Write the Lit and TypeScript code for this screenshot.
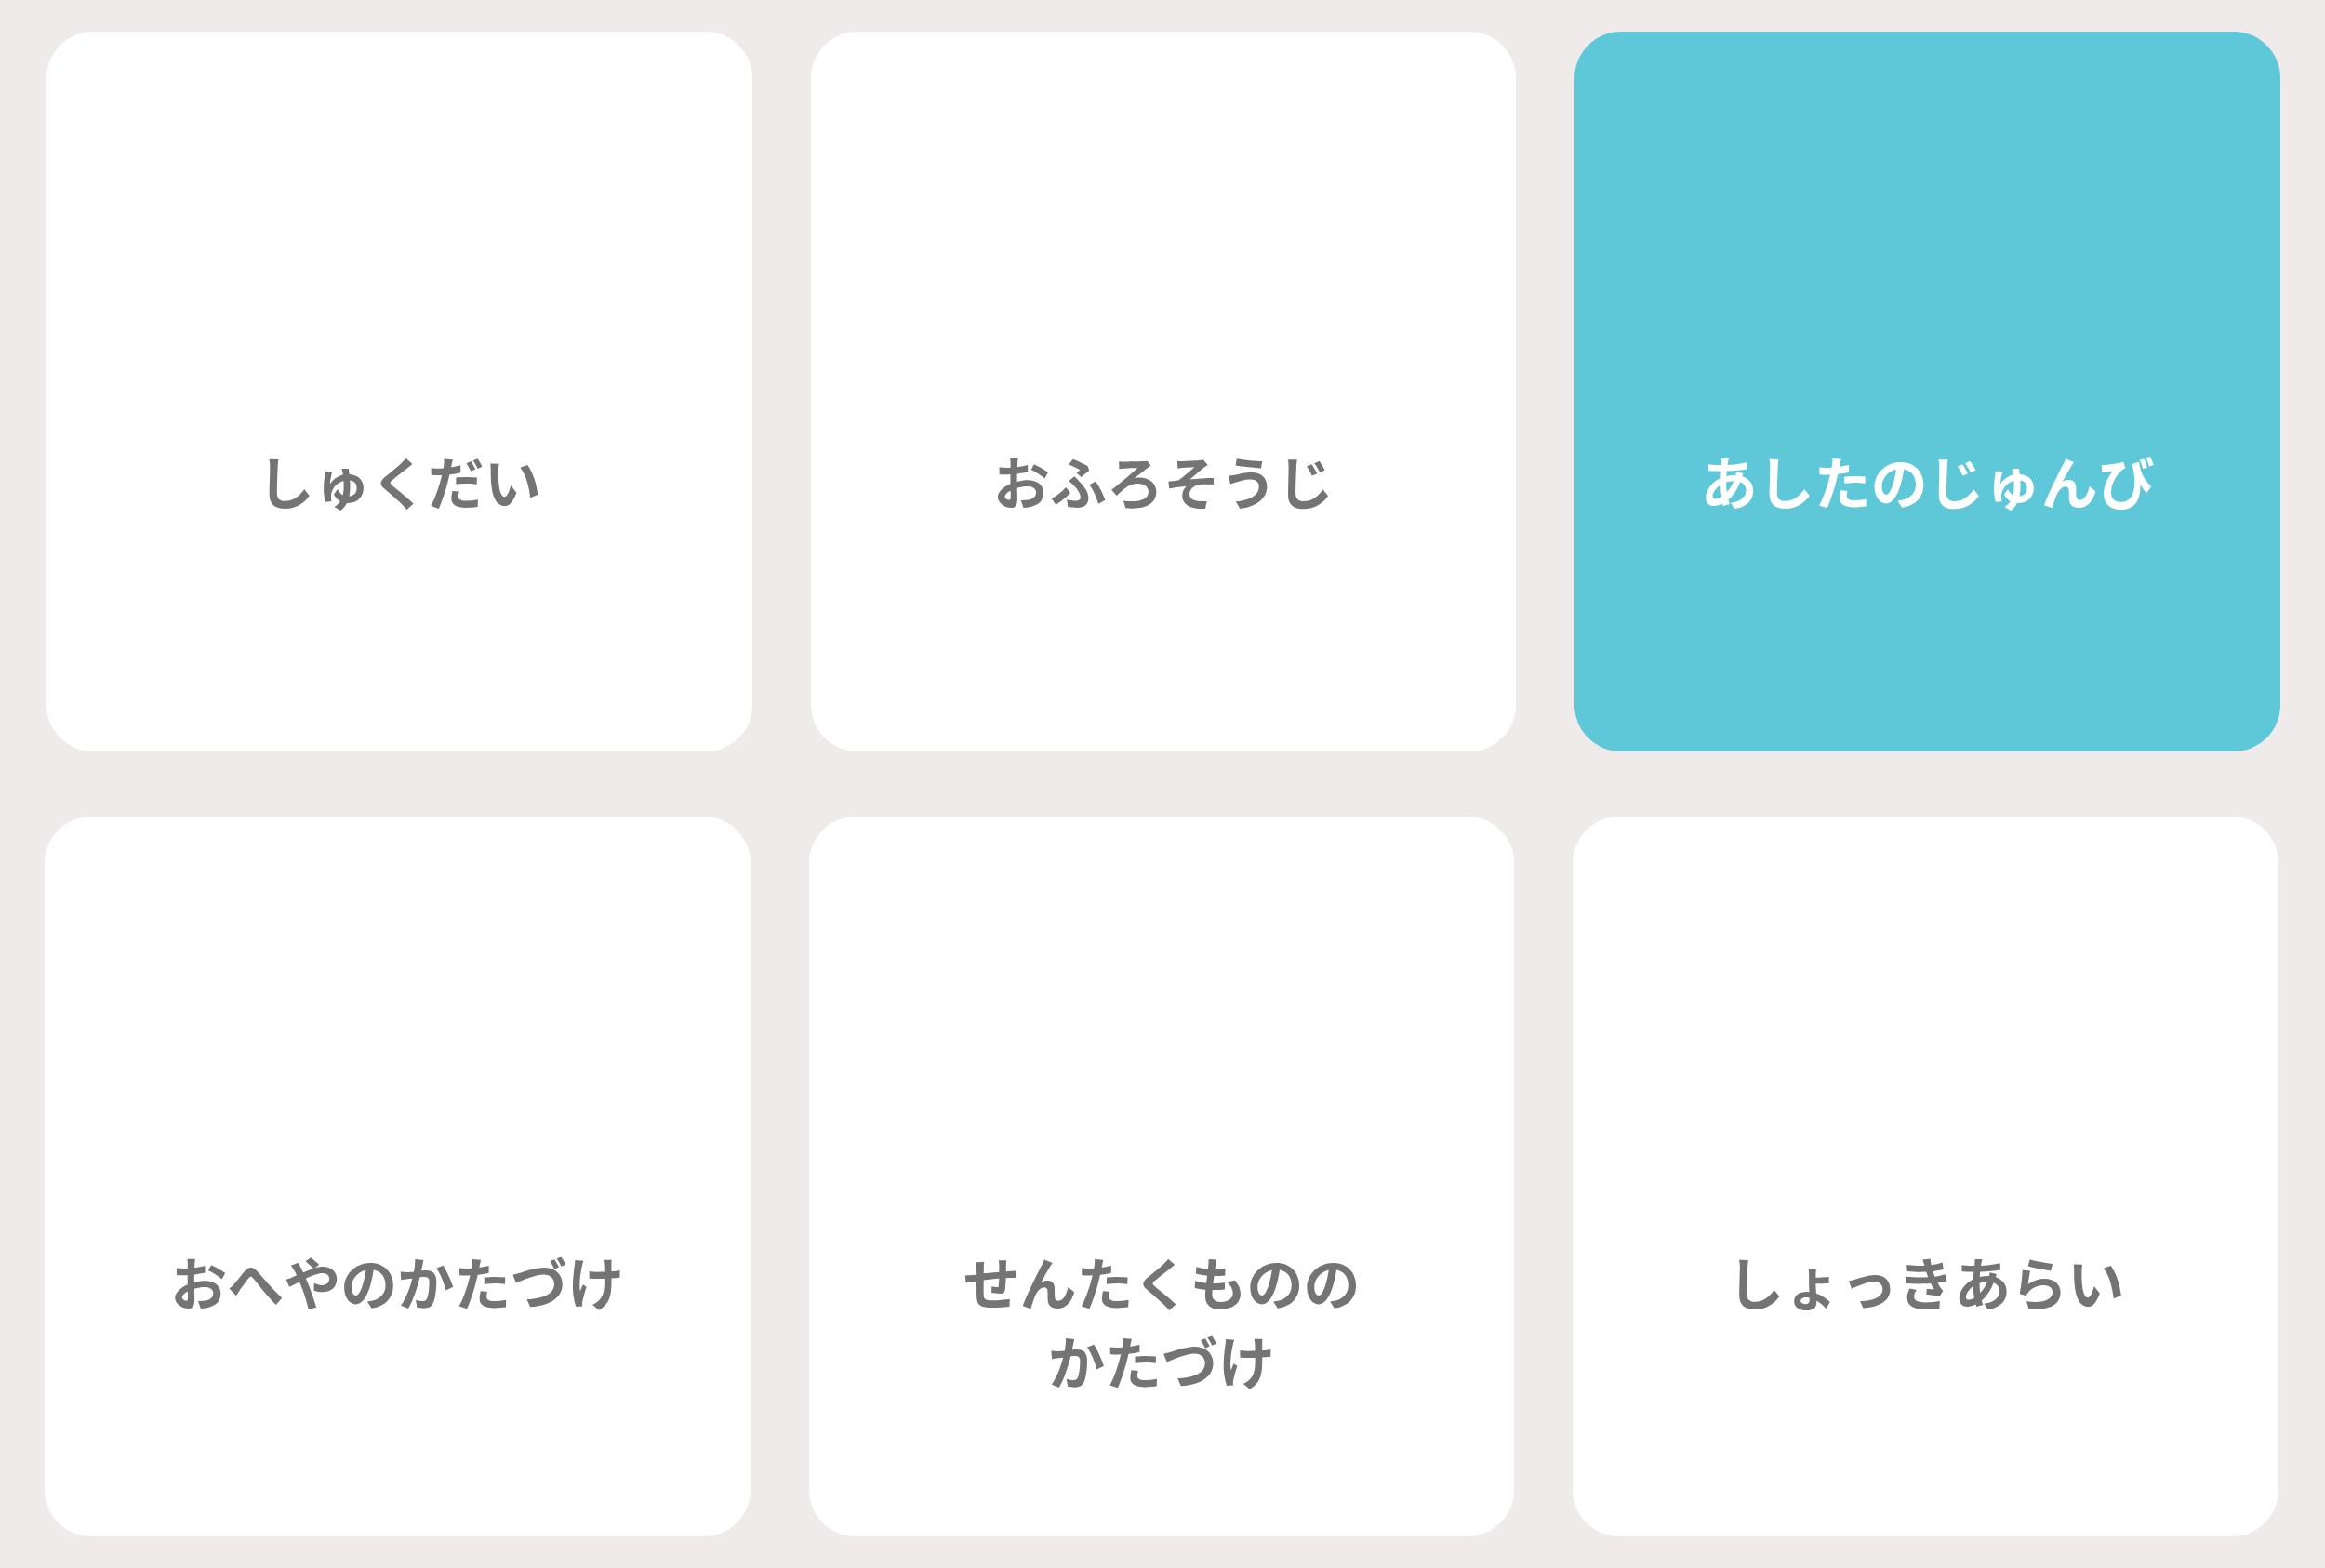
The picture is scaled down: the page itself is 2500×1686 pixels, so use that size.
import { LitElement, html, css } from "lit";
import { customElement, property, state } from "lit/decorators.js";

interface Chore {
  id: string;
  lines: string[];
}

const ROWS: Chore[][] = [
  [
    { id: "homework", lines: ["しゅくだい"] },
    { id: "bath", lines: ["おふろそうじ"] },
    { id: "tomorrow", lines: ["あしたのじゅんび"] },
  ],
  [
    { id: "room", lines: ["おへやのかたづけ"] },
    { id: "laundry", lines: ["せんたくものの", "かたづけ"] },
    { id: "dishes", lines: ["しょっきあらい"] },
  ],
];

@customElement("chore-card")
export class ChoreCard extends LitElement {
  @property({ attribute: false }) lines: string[] = [];
  @property({ type: Boolean }) selected = false;

  static styles = css`
    :host {
      display: block;
      min-width: 0;
    }
    .card {
      display: flex;
      flex-direction: column;
      align-items: center;
      justify-content: flex-start;
      box-sizing: border-box;
      width: 100%;
      aspect-ratio: 50 / 51;
      margin: 0;
      padding: var(--label-top, 440px) 0 0;
      border: 0;
      border-radius: 50px;
      background: #ffffff;
      color: #747474;
      font-family: "Noto Sans CJK JP", sans-serif;
      font-size: 61px;
      font-weight: 700;
      line-height: 85px;
      white-space: nowrap;
      cursor: pointer;
    }
    .card.selected {
      background: #5ec8d8;
      color: #ffffff;
    }
    .line {
      display: block;
    }
  `;

  render() {
    return html`
      <button
        type="button"
        class=${this.selected ? "card selected" : "card"}
        aria-pressed=${this.selected ? "true" : "false"}
      >
        ${this.lines.map((line) => html`<span class="line">${line}</span>`)}
      </button>
    `;
  }
}

@customElement("app-root")
export class AppRoot extends LitElement {
  @state() private selectedId = "tomorrow";

  static styles = css`
    :host {
      display: block;
      box-sizing: border-box;
      min-height: 100vh;
      background: #efebea;
    }
    .board {
      display: flex;
      flex-direction: column;
      gap: 70px;
      padding: 34px 0;
    }
    .row {
      display: grid;
      grid-template-columns: repeat(3, minmax(0, 1fr));
      gap: 63px;
      padding: 0 50px 0 48px;
      --label-top: 457px;
    }
    .row:first-child {
      padding: 0 48px 0 50px;
      --label-top: 440px;
    }
  `;

  render() {
    return html`
      <main class="board">
        ${ROWS.map(
          (row) => html`
            <div class="row">
              ${row.map(
                (chore) => html`
                  <chore-card
                    .lines=${chore.lines}
                    .selected=${chore.id === this.selectedId}
                    @click=${() => (this.selectedId = chore.id)}
                  ></chore-card>
                `,
              )}
            </div>
          `,
        )}
      </main>
    `;
  }
}
